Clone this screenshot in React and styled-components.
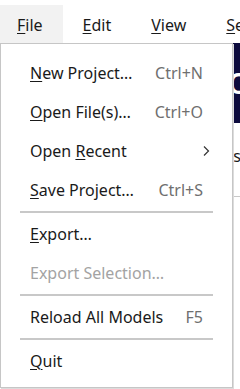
import React from "react";
import styled, { createGlobalStyle } from "styled-components";

const Global = createGlobalStyle`
  html, body { margin: 0; padding: 0; background: #ffffff; }
  body { font-family: "Noto Sans", "Open Sans", sans-serif; overflow: hidden; }
  #root { width: 240px; height: 389px; }
`;

const Screen = styled.div`
  position: relative;
  width: 240px;
  height: 389px;
  overflow: hidden;
  background: #ffffff;
  font-family: "Noto Sans", "Open Sans", sans-serif;
`;

const MenuBar = styled.div`
  display: flex;
  height: 43px;
  padding-top: 5px;
  box-sizing: border-box;
  margin-left: -3px;
  white-space: nowrap;
`;

const BarButton = styled.div`
  display: flex;
  align-items: center;
  padding: 1px 20px 0;
  height: 38px;
  box-sizing: border-box;
  font-size: 16px;
  color: #1a1a1a;
  background: ${(p) => (p.$active ? "#f2f2f2" : "transparent")};
`;

const Mn = styled.span`
  text-decoration: underline;
  text-underline-offset: 2px;
  text-decoration-thickness: 1px;
`;

const Backdrop = styled.div`
  display: flex;
  flex-direction: column;
`;

const Banner = styled.div`
  height: 80px;
  background: #0d0b3d;
  display: flex;
  align-items: center;
  padding-left: 228px;
  color: #ffffff;
  font-size: 28px;
  font-weight: 600;
  white-space: nowrap;
  overflow: hidden;
`;

const ContentRow = styled.div`
  padding: 22px 0 0 218px;
  font-size: 16px;
  color: #1a1a1a;
  white-space: nowrap;
  height: 74px;
  box-sizing: border-box;
  border-bottom: 1px solid #c8c8c8;
`;

const Menu = styled.div`
  position: absolute;
  top: 43px;
  left: 0;
  width: 233px;
  box-sizing: border-box;
  background: #ffffff;
  border: 1px solid #c6c6c6;
  box-shadow: 1px 1px 0 #dcdcdc;
  padding: 9px 0 7px;
  display: flex;
  flex-direction: column;
`;

const Item = styled.div`
  display: flex;
  align-items: center;
  height: 39px;
  padding: 0 29px 0 29px;
  font-size: 16px;
  white-space: nowrap;
  color: ${(p) => (p.$disabled ? "#a3a3a3" : "#1a1a1a")};
`;

const Label = styled.span`
  flex: 1;
`;

const Shortcut = styled.span`
  color: #6f6f6f;
`;

const Separator = styled.div`
  height: 2px;
  background: #c8c8c8;
  margin: 1.5px 19px;
`;

const Chevron = styled.svg`
  width: 8px;
  height: 12px;
  margin-right: -7px;
`;

const items = [
  { pre: "", mn: "N", post: "ew Project…", sc: "Ctrl+N" },
  { pre: "", mn: "O", post: "pen File(s)…", sc: "Ctrl+O" },
  { pre: "Open ", mn: "R", post: "ecent", sub: true },
  { pre: "", mn: "S", post: "ave Project…", sc: "Ctrl+S" },
  { sep: true },
  { pre: "", mn: "E", post: "xport…" },
  { pre: "Export Selection…", disabled: true },
  { sep: true },
  { pre: "Reload All Models", sc: "F5" },
  { sep: true },
  { pre: "", mn: "Q", post: "uit" },
];

export default function App() {
  return (
    <Screen>
      <Global />
      <MenuBar>
        <BarButton $active><Mn>F</Mn>ile</BarButton>
        <BarButton><Mn>E</Mn>dit</BarButton>
        <BarButton><Mn>V</Mn>iew</BarButton>
        <BarButton><Mn>S</Mn>ettings</BarButton>
      </MenuBar>
      <Backdrop>
        <Banner>Objects</Banner>
        <ContentRow>Instances</ContentRow>
      </Backdrop>
      <Menu>
        {items.map((it, i) =>
          it.sep ? (
            <Separator key={i} />
          ) : (
            <Item key={i} $disabled={it.disabled}>
              <Label>
                {it.pre}
                {it.mn && <Mn>{it.mn}</Mn>}
                {it.post}
              </Label>
              {it.sc && <Shortcut>{it.sc}</Shortcut>}
              {it.sub && (
                <Chevron viewBox="0 0 8 12">
                  <path d="M2 1.5 L6.5 6 L2 10.5" fill="none" stroke="#333" strokeWidth="1.2" />
                </Chevron>
              )}
            </Item>
          )
        )}
      </Menu>
    </Screen>
  );
}
